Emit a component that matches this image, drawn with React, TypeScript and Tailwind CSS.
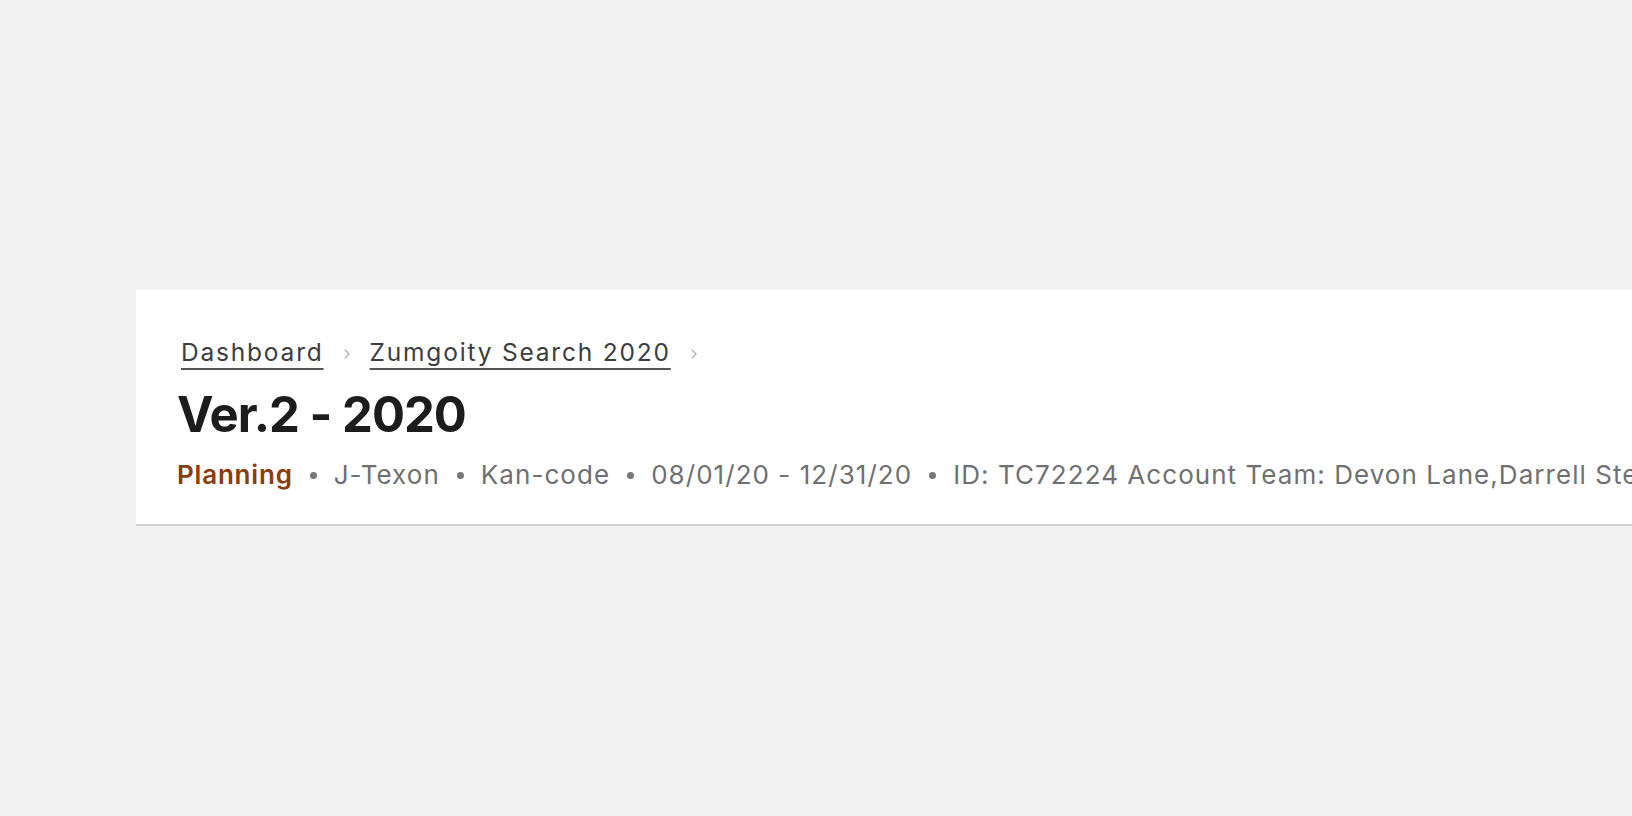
import React from "react";

const Chevron = () => (
  <svg width="10" height="12" viewBox="0 0 10 12" className="mx-[18px] mt-[3px] shrink-0" fill="none">
    <path d="M3.2 2 L7 6 L3.2 10" stroke="#b3b3b3" strokeWidth="1.4" strokeLinecap="round" strokeLinejoin="round" />
  </svg>
);

const Dot = () => <span className="mx-[17px] inline-block h-[7px] w-[7px] shrink-0 rounded-full bg-[#787878]" />;

export default function App() {
  return (
    <div
      className="h-screen w-screen overflow-hidden bg-[#f2f2f2] pl-[136px] pt-[290px]"
      style={{ fontFamily: "Inter, 'Noto Sans', sans-serif" }}
    >
      <div className="w-[1600px] border-b-2 border-[#d4d4d4] bg-white pl-[41px] pb-[33px] pt-[46px]">
        <nav className="ml-[4px] flex items-center whitespace-nowrap text-[24.5px] leading-[32px] tracking-[1.8px] text-[#3d3d3d]">
          <span className="underline decoration-[#555555] decoration-[1.5px] underline-offset-[7px]">Dashboard</span>
          <Chevron />
          <span className="underline decoration-[#555555] decoration-[1.5px] underline-offset-[7px]">Zumgoity Search 2020</span>
          <Chevron />
        </nav>
        <h1 className="mt-[17px] whitespace-nowrap text-[49px] font-bold leading-[60px] tracking-[-1px] text-[#1c1c1c]">
          Ver.2 - 2020
        </h1>
        <div className="mt-[14px] flex items-center whitespace-nowrap text-[26px] leading-[32px] tracking-[1.05px] text-[#707070]">
          <span className="font-semibold tracking-[0.8px] text-[#8a3c0c]">Planning</span>
          <Dot />
          <span>J-Texon</span>
          <Dot />
          <span>Kan-code</span>
          <Dot />
          <span>08/01/20 - 12/31/20</span>
          <Dot />
          <span>ID: TC72224 Account Team: Devon Lane,Darrell Steward</span>
        </div>
      </div>
    </div>
  );
}
